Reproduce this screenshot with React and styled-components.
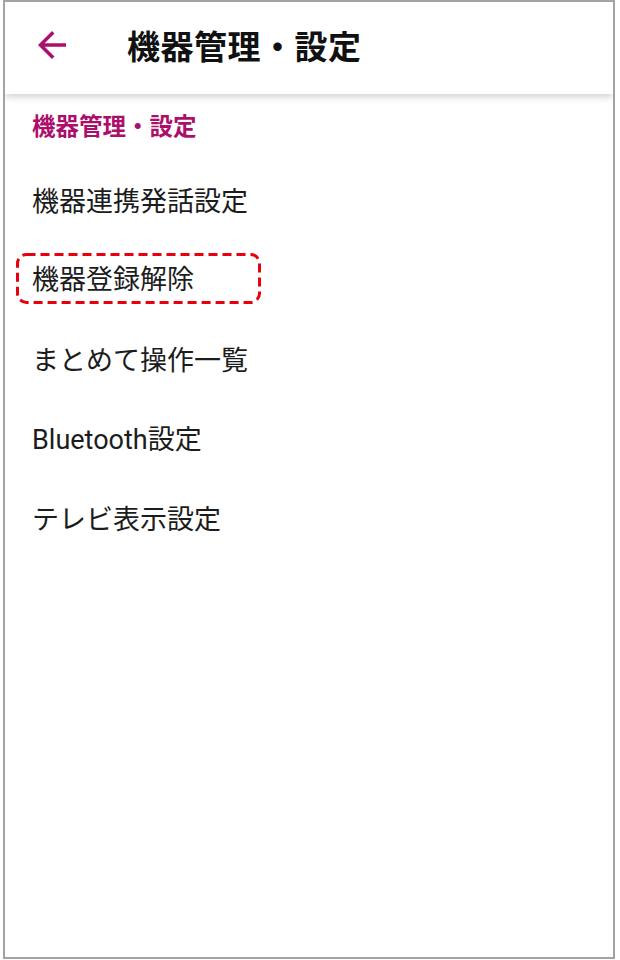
import React from 'react'
import styled, { createGlobalStyle } from 'styled-components'

const GlobalStyle = createGlobalStyle`
	html, body {
		margin: 0;
		padding: 0;
		background: #ffffff;
	}
	body {
		font-family: Roboto, "Noto Sans CJK JP", sans-serif;
		color: #1c1c1c;
	}
`

const Frame = styled.div`
	box-sizing: border-box;
	width: 612px;
	height: 959px;
	margin-left: 3px;
	border: 2px solid #a3a3a3;
	background: #ffffff;
	overflow: hidden;
`

const Header = styled.header`
	position: relative;
	z-index: 1;
	display: flex;
	align-items: center;
	height: 92px;
	padding-bottom: 7px;
	box-sizing: border-box;
	background: #ffffff;
	box-shadow: 0 3px 7px rgba(0, 0, 0, 0.18);
`

const BackButton = styled.button`
	display: flex;
	border: none;
	background: none;
	padding: 0;
	margin-left: 26px;
	color: #ab0f6b;
	cursor: pointer;
`

const Title = styled.h1`
	margin: 0 0 0 54px;
	font-size: 33px;
	font-weight: 700;
	letter-spacing: 0.5px;
	color: #111111;
`

const List = styled.div`
	display: flex;
	flex-direction: column;
	padding-left: 27px;
`

const SectionLabel = styled.div`
	display: flex;
	align-items: center;
	height: 67px;
	padding-bottom: 6px;
	box-sizing: border-box;
	font-size: 23.5px;
	font-weight: 700;
	color: #ab0f6b;
`

const Item = styled.div`
	display: flex;
	align-items: center;
	height: 79.5px;
	padding-bottom: 3px;
	box-sizing: border-box;
	font-size: 27px;
	font-weight: 400;
	color: #1c1c1c;
`

const Highlight = styled.span`
	position: relative;
	display: flex;
	align-items: center;
	box-sizing: border-box;
	width: 245px;
	height: 51px;
	margin: 0 0 0 -16px;
	padding: 0 0 2px 16px;
`

const DashedOutline = styled.svg`
	position: absolute;
	inset: 0;
	width: 100%;
	height: 100%;
	overflow: visible;
	pointer-events: none;
`

const ArrowBack = () => (
	<svg width="42" height="42" viewBox="0 0 24 24" fill="currentColor">
		<path d="M20 11H7.83l5.59-5.59L12 4l-8 8 8 8 1.41-1.41L7.83 13H20v-2z" />
	</svg>
)

const items = [
	'機器連携発話設定',
	'機器登録解除',
	'まとめて操作一覧',
	'Bluetooth設定',
	'テレビ表示設定',
]

export default function App() {
	return (
		<>
			<GlobalStyle />
			<Frame>
				<Header>
					<BackButton aria-label="戻る">
						<ArrowBack />
					</BackButton>
					<Title>機器管理・設定</Title>
				</Header>
				<List>
					<SectionLabel>機器管理・設定</SectionLabel>
					{items.map((label, i) => (
						<Item key={label}>
							{i === 1 ? (
								<Highlight>
									<DashedOutline viewBox="0 0 245 51">
										<rect
											x="1.5"
											y="1.5"
											width="242"
											height="48"
											rx="9"
											fill="none"
											stroke="#e8000c"
											strokeWidth="3"
											strokeDasharray="9 5"
										/>
									</DashedOutline>
									{label}
								</Highlight>
							) : (
								label
							)}
						</Item>
					))}
				</List>
			</Frame>
		</>
	)
}
